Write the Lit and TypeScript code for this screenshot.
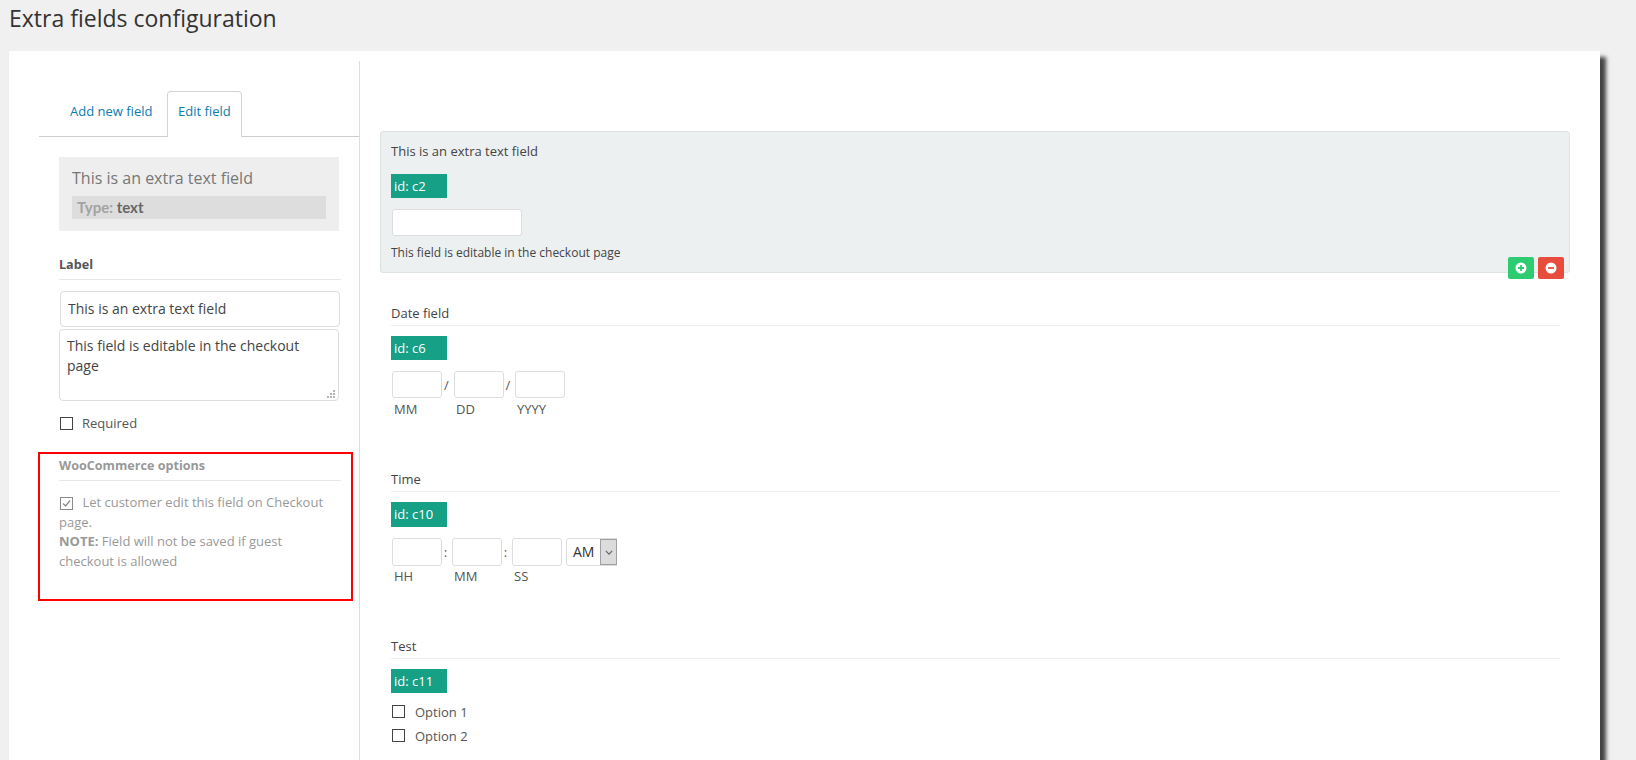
import { LitElement, html, css } from "lit";
import { customElement } from "lit/decorators.js";

type Seg = { label: string; sep?: string; sepWidth?: number };

const tick = html`<svg viewBox="0 0 13 13" width="11" height="11">
  <path d="M2.5 6.5 5.4 9.4 10.8 3" fill="none" stroke="#8a8a8a" stroke-width="1.6" />
</svg>`;

// the dotted grip in the corner of the textarea
const grip = html`<svg class="grip" viewBox="0 0 8 8" width="8" height="8">
  <path
    d="M6 0h2v2H6zM3 3h2v2H3zM6 3h2v2H6zM0 6h2v2H0zM3 6h2v2H3zM6 6h2v2H6z"
    fill="#b5b5b5"
  />
</svg>`;

@customElement("app-root")
export class AppRoot extends LitElement {
  static styles = css`
    :host {
      display: block;
      height: 760px;
      overflow: hidden;
      background: #f0f0f0;
      font-family: "Open Sans", sans-serif;
      font-size: 13px;
      color: #444;
    }
    * {
      box-sizing: border-box;
    }
    .page-title {
      height: 51px;
      margin: 0;
      padding-left: 9px;
      font-size: 23px;
      font-weight: 400;
      line-height: 37px;
      color: #333;
    }
    .card {
      display: flex;
      width: 1591px;
      height: 720px;
      margin-left: 9px;
      padding-top: 10px;
      background: #fff;
      box-shadow: 6px 6px 4px #444;
    }

    /* left column */
    .side {
      width: 351px;
      flex: none;
      padding-left: 30px;
      border-right: 1px solid #ddd;
    }
    .tabs {
      display: flex;
      height: 46px;
      margin-top: 30px;
      padding-left: 18px;
      border-bottom: 1px solid #ccc;
    }
    .tab {
      width: 110px;
      height: 46px;
      padding: 11px 0 0 13px;
      line-height: 18px;
      color: #0a7cae;
    }
    .tab.active {
      width: 75px;
      padding: 10px 0 0 10px;
      background: #fff;
      border: 1px solid #d4d4d4;
      border-bottom: none;
      border-radius: 4px 4px 0 0;
    }
    .summary {
      width: 280px;
      height: 74px;
      margin: 20px 0 0 20px;
      padding: 10px 13px 0;
      background: #eee;
    }
    .summary-title {
      font-size: 16px;
      line-height: 22px;
      color: #777;
    }
    .summary-type {
      height: 23px;
      margin-top: 7px;
      padding-left: 5px;
      background: #ddd;
      font-family: Lato, sans-serif;
      font-size: 15px;
      font-weight: 700;
      line-height: 23px;
      color: #666;
    }
    .summary-type span {
      color: #a3a3a3;
    }
    .section-head {
      width: 282px;
      padding-bottom: 5px;
      border-bottom: 1px solid #e8e8e8;
      font-size: 12.6px;
      font-weight: 700;
      line-height: 18px;
      color: #555;
    }
    .label-head {
      margin: 25px 0 0 20px;
    }
    .input-label,
    .input-desc {
      display: block;
      font-family: "Open Sans", sans-serif;
      font-size: 14px;
      color: #444;
      background: #fff;
      border: 1px solid #ddd;
      border-radius: 4px;
      outline: none;
    }
    .input-label {
      width: 280px;
      height: 36px;
      margin: 11px 0 0 21px;
      padding: 0 7px 2px;
    }
    .desc-wrap {
      position: relative;
      width: 280px;
      height: 72px;
      margin: 2px 0 0 20px;
    }
    .input-desc {
      width: 100%;
      height: 100%;
      padding: 6px 7px;
      line-height: 20px;
      resize: none;
    }
    .grip {
      position: absolute;
      right: 4px;
      bottom: 3px;
    }
    .check {
      display: inline-flex;
      align-items: center;
      justify-content: center;
      width: 13px;
      height: 13px;
      flex: none;
      background: #fff;
      border: 1px solid #444;
    }
    .check.muted {
      border-color: #8a8a8a;
      vertical-align: -2px;
    }
    .required {
      display: flex;
      align-items: center;
      gap: 9px;
      height: 18px;
      margin: 13px 0 0 21px;
      color: #555;
    }
    .woo {
      width: 315px;
      height: 149px;
      margin: 20px 0 0 -1px;
      padding: 3px 0 0 19px;
      border: 2px solid #f00;
      color: #999;
    }
    .woo .section-head {
      color: #999;
    }
    .woo-text {
      width: 270px;
      margin-top: 12px;
      line-height: 19.5px;
    }
    .woo-text .check {
      margin: 0 6px 0 1px;
    }
    .woo-text b {
      font-weight: 700;
    }

    /* right column */
    .main {
      flex: 1;
      padding: 70px 0 0 20px;
    }
    .panel {
      position: relative;
      width: 1190px;
      height: 142px;
      padding: 10px 0 0 10px;
      background: #ecf0f1;
      border: 1px solid #dde2e3;
      border-radius: 3px;
    }
    .field {
      width: 1180px;
      padding-left: 11px;
    }
    .field-title {
      line-height: 18px;
    }
    .field .field-title {
      padding-bottom: 3px;
      border-bottom: 1px solid #eee;
      width: 1169px;
    }
    .id-badge {
      width: 56px;
      height: 24px;
      margin-top: 10px;
      padding-left: 3px;
      background: #16a085;
      line-height: 24px;
      color: #fff;
    }
    .panel .id-badge {
      margin-top: 14px;
    }
    .id-badge.tall {
      height: 25px;
      line-height: 25px;
    }
    .box {
      display: block;
      width: 50px;
      height: 27px;
      background: #fff;
      border: 1px solid #ddd;
      border-radius: 3px;
      outline: none;
    }
    .box.wide {
      width: 130px;
      margin: 11px 0 0 1px;
    }
    .help {
      margin-top: 9px;
      font-size: 12px;
      line-height: 16px;
    }
    .parts {
      display: flex;
      margin: 11px 0 53px 1px;
    }
    .part-label {
      padding: 3px 0 0 2px;
      line-height: 16px;
      color: #555;
    }
    .parts.tall .box {
      height: 28px;
    }
    .parts.tall .part-label {
      padding-top: 2px;
    }
    .sep {
      height: 27px;
      padding-right: 3px;
      line-height: 29px;
      text-align: center;
      color: #555;
    }
    .ampm {
      display: flex;
      width: 51px;
      height: 28px;
      margin-left: 4px;
      background: #fff;
      border: 1px solid #ddd;
      border-radius: 3px 0 0 3px;
      font-size: 14px;
      line-height: 26px;
      color: #333;
    }
    .ampm span {
      flex: 1;
      padding-left: 6px;
    }
    .ampm i {
      display: flex;
      align-items: center;
      justify-content: center;
      width: 17px;
      margin-right: -1px;
      background: #dcdcdc;
      border: 1px solid #a0a0a0;
    }
    .options {
      margin-top: 6px;
    }
    .option {
      display: flex;
      align-items: center;
      gap: 10px;
      height: 24px;
      margin-left: 1px;
      color: #555;
    }
    .option span:last-child {
      padding-top: 2px;
    }
    .actions {
      position: absolute;
      right: 5px;
      bottom: -7px;
      display: flex;
      gap: 4px;
    }
    .action {
      display: flex;
      align-items: center;
      justify-content: center;
      width: 26px;
      height: 22px;
      border-radius: 2px;
    }
    .action.add {
      background: #2ecc71;
    }
    .action.remove {
      background: #e74c3c;
    }
  `;

  _parts(segs: Seg[], tall = false, ampm = false) {
    return html`
      <div class="parts ${tall ? "tall" : ""}">
        ${segs.map(
          (s) => html`
            <div>
              <input class="box" />
              <div class="part-label">${s.label}</div>
            </div>
            ${s.sep ? html`<div class="sep" style="width:${s.sepWidth}px">${s.sep}</div>` : ""}
          `
        )}
        ${ampm
          ? html`<div class="ampm">
              <span>AM</span>
              <i>
                <svg viewBox="0 0 10 6" width="8" height="5">
                  <path d="M1 1l4 4 4-4" fill="none" stroke="#666" stroke-width="1.6" />
                </svg>
              </i>
            </div>`
          : ""}
      </div>
    `;
  }

  render() {
    return html`
      <h1 class="page-title">Extra fields configuration</h1>
      <div class="card">
        <div class="side">
          <div class="tabs">
            <div class="tab">Add new field</div>
            <div class="tab active">Edit field</div>
          </div>
          <div class="summary">
            <div class="summary-title">This is an extra text field</div>
            <div class="summary-type"><span>Type:</span> text</div>
          </div>
          <div class="section-head label-head">Label</div>
          <input class="input-label" .value=${"This is an extra text field"} />
          <div class="desc-wrap">
            <textarea class="input-desc" .value=${"This field is editable in the checkout page"}></textarea>
            ${grip}
          </div>
          <div class="required"><span class="check"></span>Required</div>
          <div class="woo">
            <div class="section-head">WooCommerce options</div>
            <div class="woo-text">
              <span class="check muted">${tick}</span> Let customer edit this field on Checkout page.<br />
              <b>NOTE:</b> Field will not be saved if guest checkout is allowed
            </div>
          </div>
        </div>

        <div class="main">
          <div class="panel">
            <div class="field-title">This is an extra text field</div>
            <div class="id-badge">id: c2</div>
            <input class="box wide" />
            <div class="help">This field is editable in the checkout page</div>
            <div class="actions">
              <div class="action add">
                <svg viewBox="0 0 12 12" width="12" height="12">
                  <circle cx="6" cy="6" r="5.5" fill="#fff" />
                  <path d="M6 3v6M3 6h6" stroke="#2ecc71" stroke-width="1.8" />
                </svg>
              </div>
              <div class="action remove">
                <svg viewBox="0 0 12 12" width="12" height="12">
                  <circle cx="6" cy="6" r="5.5" fill="#fff" />
                  <path d="M3 6h6" stroke="#e74c3c" stroke-width="1.8" />
                </svg>
              </div>
            </div>
          </div>

          <div class="field" style="margin-top:31px">
            <div class="field-title">Date field</div>
            <div class="id-badge">id: c6</div>
            ${this._parts([
              { label: "MM", sep: "/", sepWidth: 12 },
              { label: "DD", sep: "/", sepWidth: 11 },
              { label: "YYYY" },
            ])}
          </div>

          <div class="field">
            <div class="field-title">Time</div>
            <div class="id-badge tall">id: c10</div>
            ${this._parts(
              [
                { label: "HH", sep: ":", sepWidth: 10 },
                { label: "MM", sep: ":", sepWidth: 10 },
                { label: "SS" },
              ],
              true,
              true
            )}
          </div>

          <div class="field">
            <div class="field-title">Test</div>
            <div class="id-badge">id: c11</div>
            <div class="options">
              <div class="option"><span class="check"></span><span>Option 1</span></div>
              <div class="option"><span class="check"></span><span>Option 2</span></div>
            </div>
          </div>
        </div>
      </div>
    `;
  }
}
